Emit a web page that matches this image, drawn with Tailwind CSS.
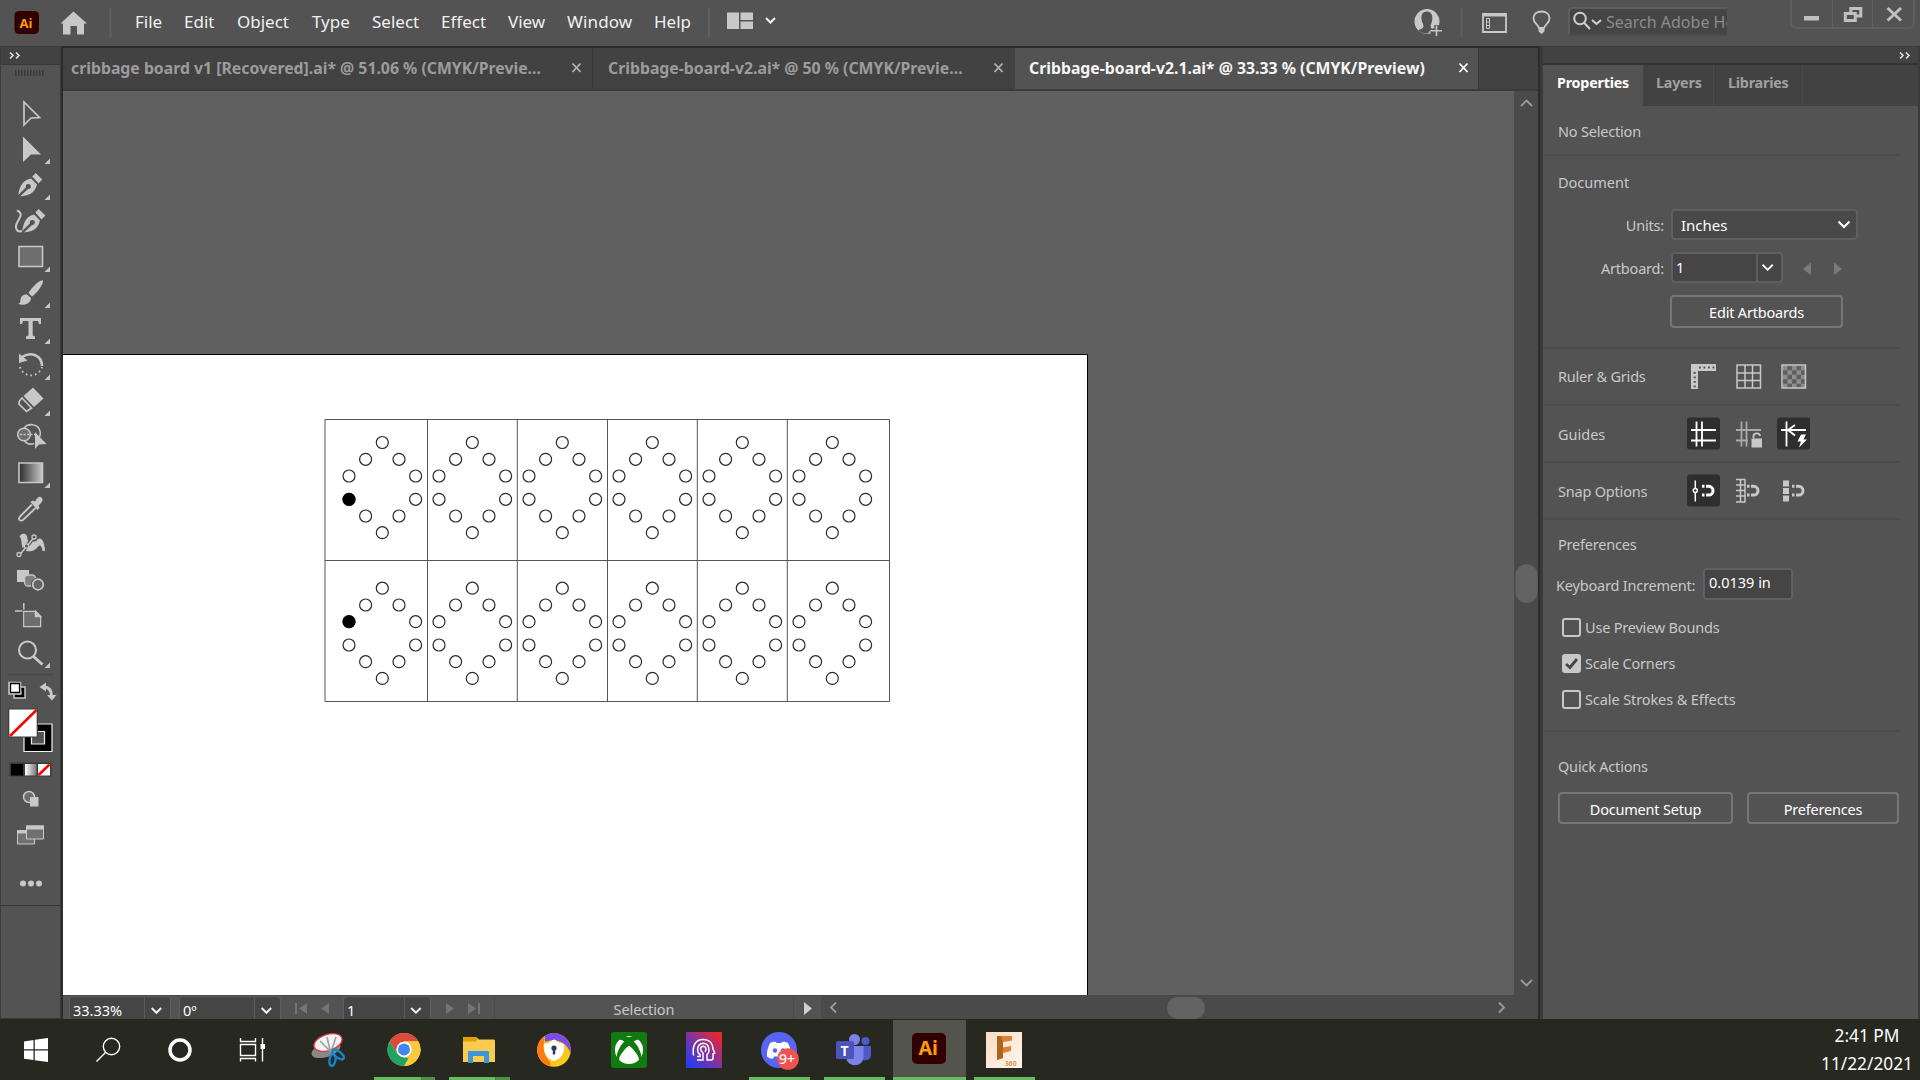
<!DOCTYPE html>
<html lang="en">
<head>
<meta charset="utf-8">
<title>Adobe Illustrator</title>
<script src="https://cdn.jsdelivr.net/npm/@tailwindcss/browser@4"></script>
</head>
<body class="w-[1920px] h-[1080px] overflow-hidden bg-[#535353] font-['Noto_Sans',sans-serif] flex flex-col text-[#c8c8c8]">

<!-- application bar -->
<header class="h-[46px] shrink-0 flex items-start bg-[#535353] whitespace-nowrap">
  <svg class="w-[115px] h-[46px] shrink-0" viewBox="0 0 115 46">
    <rect x="14.500" y="11" width="24.500" height="23" rx="4.500" fill="#310000"/>
    <text x="19.500" y="27.500" font-size="13" font-weight="700" fill="#ff9a00" font-family="Noto Sans">Ai</text>
    <path fill="#c8c8c8" d="M73.500 11.500 87 23.500H84V34.500H77V26H70.500V34.500H63V23.500H60.500Z"/>
    <path d="M110.500 8V37" stroke="#5f5f5f" stroke-width="2"/>
  </svg>
  <nav class="flex h-[43px] items-center pl-[20px] text-[17px] text-[#f0f0f0]">
    <span class="w-[49px]">File</span><span class="w-[53px]">Edit</span><span class="w-[75px]">Object</span><span class="w-[60px]">Type</span><span class="w-[69px]">Select</span><span class="w-[67px]">Effect</span><span class="w-[59px]">View</span><span class="w-[87px] tracking-[0.15px]">Window</span><span class="w-[50px]">Help</span>
  </nav>
  <svg class="w-[86px] h-[46px] shrink-0" viewBox="704 0 86 46" fill="#c8c8c8">
    <path d="M709 8V37" stroke="#5f5f5f" stroke-width="2"/>
    <path d="M727 12.500H739V29H727ZM740.500 12.500H753V20H740.500ZM740.500 21.500H753V29H740.500Z"/>
    <path d="M766 18 770.500 22.500 775 18" fill="none" stroke="#f4f4f4" stroke-width="2"/>
  </svg>
  <svg class="w-[180px] h-[46px] shrink-0 ml-auto" viewBox="1388 0 180 46" fill="none" stroke="#c8c8c8" stroke-width="1.800">
    <circle cx="1427" cy="21.500" r="12.500" fill="#c8c8c8" stroke="none"/>
    <path d="M1427 11.500C1422.500 11.500 1421 15 1421.500 19 1422 23 1423.500 24 1423.500 26.500 1423 29 1419.500 29 1418.500 30.500 1421 33 1424 33.500 1428 33.500L1431.500 28C1430 27.500 1430.500 25 1431.500 23 1433.500 17 1432 11.500 1427 11.500Z" fill="#535353" stroke="none"/>
    <path d="M1436.500 25V36.500M1430.500 30.700H1442" stroke="#535353" stroke-width="4.500"/><path d="M1436.500 25.500V36M1431 30.700H1442" stroke-width="1.600"/>
    <path d="M1461.500 8V37" stroke="#5f5f5f" stroke-width="2"/>
    <path d="M1483 14H1506V32H1483Z"/><path d="M1483 15H1506" stroke-width="3"/><path d="M1486.500 18.500H1489.500V28.500H1486.500ZM1486.500 22H1489.500M1486.500 25.500H1489.500" stroke-width="1"/>
    <path d="M1539 28.500C1539 25 1533.500 23.500 1533.500 18.500 1533.500 14 1537 11.500 1541.500 11.500S1549.500 14 1549.500 18.500C1549.500 23.500 1544 25 1544 28.500"/><path d="M1538.500 27H1544.500V31.500L1541.500 34 1538.500 31.500Z" fill="#c8c8c8" stroke="none"/>
  </svg>
  <div class="mt-[7px] w-[159px] h-[29px] shrink-0 border-2 border-r-0 border-[#5e5e5e] border-b-[#4b4b4b] rounded-l bg-[#454545] flex items-center overflow-hidden text-[16px] text-[#8c8c8c]">
    <svg class="w-[36px] h-[27px] shrink-0" viewBox="0 0 36 27" fill="none" stroke="#d0d0d0" stroke-width="2"><circle cx="10" cy="10.500" r="5.800"/><path d="M14.300 15 20 21M22 12 26.500 16 31 12"/></svg>
    <span class="shrink-0 pt-px">Search Adobe Help</span>
  </div>
  <div class="ml-[63px] mr-[5px] w-[125px] h-[29px] shrink-0 border-2 border-t-0 border-[#5f5f5f] rounded-b-md grid grid-cols-3 divide-x divide-[#5f5f5f]">
    <svg viewBox="0 0 40 29" class="h-[29px]"><path d="M12 16H27V20.500H12Z" fill="#c0c0c0"/></svg>
    <svg viewBox="0 0 40 29" class="h-[29px]" fill="none" stroke="#c0c0c0" stroke-width="3"><path d="M13.300 13.500H23.300V20.500H13.300ZM18.800 13V8.500H28.800V16H23.800"/></svg>
    <svg viewBox="0 0 40 29" class="h-[29px]" fill="none" stroke="#c0c0c0" stroke-width="3"><path d="M14.500 8 28 20.500M28 8 14.500 20.500"/></svg>
  </div>
</header>

<main class="h-[973px] shrink-0 flex">
  <!-- tools -->
  <aside class="w-[61px] shrink-0 flex flex-col bg-[#535353] border-t border-[#3c3c3c] border-l border-r">
    <div class="h-[18px] shrink-0 bg-[#424242] border-b border-[#393939]"><svg class="w-[59px] h-[17px]" viewBox="0 0 59 17" fill="none" stroke="#e0e0e0" stroke-width="1.600"><path d="M9 5.500 12 8.500 9 11.500M15 5.500 18 8.500 15 11.500"/></svg></div>
    <div class="h-[30px] shrink-0"><svg class="w-[59px] h-[30px]" viewBox="0 0 59 30"><path d="M14 8H43" stroke="#3a3a3a" stroke-width="6" stroke-dasharray="1.500 1.500"/></svg></div>
    <div class="flex flex-col [&>svg]:w-[60px] [&>svg]:h-[36px] [&>svg]:-ml-px">
      <svg viewBox="0 0 60 36"><path d="M24 7 39.500 22.500 31 23 24 30Z" fill="none" stroke="#c8c8c8" stroke-width="1.700"/></svg>
      <svg viewBox="0 0 60 36" fill="#c8c8c8"><path d="M23 5.500 41 23.500H31L23 31ZM50 27.500V33H44.500Z"/></svg>
      <svg viewBox="0 0 60 36" fill="#c8c8c8"><path d="M32.300 9.500 35.700 6 42.300 12.500 38.500 16.500ZM18.300 28 26 20.200A2.500 2.500 0 1 1 28 22L20 29.500C28 28.500 34.500 27 37 17.500L31 11.500C21 13.500 19.500 21 18.300 28ZM50 27.500V33H44.500Z"/></svg>
      <svg viewBox="0 0 60 36" fill="#c8c8c8"><path d="M35.300 9.500 38.700 6 45.300 12.500 41.500 16.500ZM22.300 28 30 20.200A2.500 2.500 0 1 1 32 22L24 29.500C32 28.500 37.500 27 40 17.500L34 11.500C25 13.500 23.500 21 22.300 28Z"/><path d="M17 7.500C23 10 20.500 14 17.500 19 14 25 17 30 22 28" fill="none" stroke="#c8c8c8" stroke-width="2"/></svg>
      <svg viewBox="0 0 60 36" fill="#c8c8c8"><path d="M19 7.500H42.500V27.500H19Z" fill="#6e6e6e" stroke="#c8c8c8" stroke-width="1.600"/><path d="M50 27.500V33H44.500Z"/></svg>
      <svg viewBox="0 0 60 36" fill="#c8c8c8"><path d="M42.500 5C38 6 31 13.500 28.500 18L32 21.500C36.500 18.500 42 11 43 7ZM27 19.500C23 19 20.500 22 20.500 25 20.500 27.500 19.500 28.500 18 28.800 23 31 30.500 29.500 31 23ZM50 27.500V33H44.500Z"/></svg>
      <svg viewBox="0 0 60 36" fill="#c8c8c8"><path d="M20 7H41V13H39L38 10H32.700V24.500L35 25.500V28H26V25.500L28.500 24.500V10H23L22 13H20ZM50 27.500V33H44.500Z"/></svg>
      <svg viewBox="0 0 60 36" fill="#c8c8c8"><path d="M19 6.500V16L27.500 13.500Z"/><path d="M22 10C32 4 42 9 42 19" fill="none" stroke="#c8c8c8" stroke-width="2.500"/><path d="M20 20C22 29 37 33 42 20" fill="none" stroke="#c8c8c8" stroke-width="1.800" stroke-dasharray="1.700 3"/><path d="M50 27.500V33H44.500Z"/></svg>
      <svg viewBox="0 0 60 36" fill="#c8c8c8"><path d="M33 4.500 43.500 15.500 34 24 23.500 13Z"/><path d="M22 15 31.500 25 26.500 28.500 19 21Q18.500 18.500 22 15Z" fill="none" stroke="#c8c8c8" stroke-width="1.700"/><path d="M50 27.500V33H44.500Z"/></svg>
      <svg viewBox="0 0 60 36" fill="none" stroke="#c8c8c8" stroke-width="1.500"><circle cx="24" cy="15.500" r="6.300" fill="#6e6e6e"/><path d="M24 9.500C27 4 38 4 40 12 41 15 40 17 39.500 18M24 21.500C27 25 30 26 34 24.500"/><path d="M20 15.500H35" stroke-dasharray="2 1.500"/><path d="M35 13V30L39 25.500 46.500 25Z" fill="#c8c8c8" stroke="none"/></svg>
      <svg viewBox="0 0 60 36"><defs><linearGradient id="gr"><stop stop-color="#2c2c2c"/><stop offset="1" stop-color="#c8c8c8"/></linearGradient></defs><path d="M19 8H42.500V27.500H19Z" fill="url(#gr)" stroke="#c8c8c8" stroke-width="1.600"/><path d="M50 27.500V33H44.500Z" fill="#c8c8c8"/></svg>
      <svg viewBox="0 0 60 36"><path d="M32 13.500 20.500 25C17.500 28 20 31.500 23.500 28.500L35.500 17" fill="none" stroke="#c8c8c8" stroke-width="1.900"/><path d="M30.500 11 32.500 9.500 35 10.500C38 5 40 5 41.500 6.500 44 9 42 11.500 38.500 14.500L39.500 17 37.500 19Z" fill="#c8c8c8"/></svg>
      <svg viewBox="0 0 60 36" fill="#c8c8c8"><path d="M21 7.500C24 5.500 28 7 27.500 13 28 15 34 15 36.500 14 38 9.500 43 11 44 17 44.500 20 45.300 22 44.800 24H42.500C42 19 40 17.500 38.500 19 36 23.500 29 26.500 23.500 22.500 21 19 22 11 19.500 9.500Z"/><path d="M20 28 33.500 10.500" fill="none" stroke="#535353" stroke-width="4"/><path d="M20 27.500 33.500 11" fill="none" stroke="#c8c8c8" stroke-width="1.400"/><g fill="#535353" stroke="#c8c8c8" stroke-width="1.300"><circle cx="19" cy="27.500" r="2"/><circle cx="26.500" cy="19" r="2.200"/><circle cx="34" cy="10" r="2"/></g></svg>
      <svg viewBox="0 0 60 36"><path d="M17 7H29V19H17Z" fill="#c8c8c8"/><rect x="24.500" y="12" width="11" height="11" rx="3.500" fill="#808080" stroke="#c8c8c8" stroke-width="1.300"/><circle cx="38" cy="21.500" r="7" fill="#535353"/><circle cx="38" cy="21.500" r="5.300" fill="#646464" stroke="#c8c8c8" stroke-width="1.700"/></svg>
      <svg viewBox="0 0 60 36" fill="none" stroke="#c8c8c8" stroke-width="1.500"><path d="M23.800 4V10.500M15 12H22.500M23.800 12.500H35.500L40.500 17.500V27.500H23.800Z"/><path d="M24.500 13.500H35V18H40V27H24.500Z" fill="#6e6e6e" stroke="none"/><path d="M35.500 12.500V17.500H40.500Z" fill="#c8c8c8"/></svg>
      <svg viewBox="0 0 60 36"><circle cx="27.500" cy="15" r="8.500" fill="none" stroke="#c8c8c8" stroke-width="2"/><path d="M33.500 21.500 42.500 29.500" stroke="#c8c8c8" stroke-width="3"/><path d="M50 27.500V33H44.500Z" fill="#c8c8c8"/></svg>
    </div>
    <svg class="w-[60px] h-[234px] shrink-0 -ml-px" viewBox="0 671 60 234" fill="none">
      <path d="M8 674.500H53" stroke="#474747" stroke-width="1.500"/>
      <path d="M14 687H25V698H14Z" fill="#000" stroke="#c8c8c8" stroke-width="1.500"/><path d="M17.500 690.500H21.500V694.500H17.500Z" fill="#c8c8c8"/><path d="M9 682.500H20.500V694H9Z" fill="#fff" stroke="#c8c8c8" stroke-width="1.500"/><path d="M10.500 683.500H19.500V692.500H10.500Z" fill="#fff" stroke="#000" stroke-width="1.300"/>
      <path d="M44 687C49 687 51.500 690 51.500 696" stroke="#c8c8c8" stroke-width="3"/><path d="M46 682.500V691.500L39.500 687ZM47 695H56.500L52 700.500Z" fill="#c8c8c8"/>
      <path d="M24 724H52V751.500H24Z" fill="#000" stroke="#f0f0f0" stroke-width="1.200"/><path d="M31.500 731.500H44.500V744H31.500Z" fill="#535353" stroke="#f0f0f0" stroke-width="1.200"/>
      <path d="M8.700 709H37.300V737H8.700Z" fill="#fff" stroke="#3a3a3a" stroke-width="1.200"/><path d="M10 736 36.500 710" stroke="#ff0000" stroke-width="2.500"/>
      <path d="M9.500 762.500H51.500V776.500H9.500Z" fill="#3a3a3a"/><path d="M11 764H23V775.500H11Z" fill="#000"/><defs><linearGradient id="gw"><stop stop-color="#fff"/><stop offset="1" stop-color="#777"/></linearGradient></defs><path d="M25 764H36.500V775.500H25Z" fill="url(#gw)"/><path d="M38 764H50V775.500H38Z" fill="#fff"/><path d="M38.500 775 49.500 764.500" stroke="#ff0000" stroke-width="2.500"/>
      <circle cx="29" cy="797" r="5.500" fill="#6e6e6e" stroke="#c8c8c8" stroke-width="1.500"/><path d="M30 797H38.500V806.500H30Z" fill="#c8c8c8"/>
      <path d="M17.500 830.500H34.500V844H17.500Z" fill="#707070" stroke="#c8c8c8"/><path d="M17 832H35" stroke="#c8c8c8" stroke-width="3"/><path d="M26.500 826H43.500V839H26.500Z" fill="#707070" stroke="#c8c8c8"/><path d="M26 827.500H44" stroke="#c8c8c8" stroke-width="4"/>
      <g fill="#c8c8c8"><circle cx="23" cy="883.500" r="3"/><circle cx="31" cy="883.500" r="3"/><circle cx="39" cy="883.500" r="3"/></g>
    </svg>
    <div class="grow border-t border-b border-[#383838] bg-[#535353]"></div>
  </aside>

  <!-- document window -->
  <section class="w-[1479px] shrink-0 border-t-2 border-l-2 border-r-2 border-[#2c2c2c] flex flex-col">
    <div class="h-[43px] shrink-0 flex bg-[#424242] border-b-2 border-[#3b3b3b] text-[15.800px] font-bold text-[#9c9c9c] whitespace-nowrap leading-[40px]">
      <div class="w-[530px] pl-[8px] flex border-r border-[#383838]"><span class="w-[500px] shrink-0">cribbage board v1 [Recovered].ai* @ 51.06 % (CMYK/Previe...</span><svg class="w-[14px] h-[40px]" viewBox="0 0 14 40" fill="none" stroke="#b4b4b4" stroke-width="1.800"><path d="M1.500 15.500 9.500 24M9.500 15.500 1.500 24"/></svg></div>
      <div class="w-[422px] pl-[15px] flex"><span class="w-[385px] shrink-0">Cribbage-board-v2.ai* @ 50 % (CMYK/Previe...</span><svg class="w-[14px] h-[40px]" viewBox="0 0 14 40" fill="none" stroke="#b4b4b4" stroke-width="1.800"><path d="M1.500 15.500 9.500 24M9.500 15.500 1.500 24"/></svg></div>
      <div class="w-[464px] pl-[14px] flex bg-[#535353] text-[#f5f5f5] border-r border-[#383838]"><span class="w-[429px] shrink-0">Cribbage-board-v2.1.ai* @ 33.33 % (CMYK/Preview)</span><svg class="w-[14px] h-[40px]" viewBox="0 0 14 40" fill="none" stroke="#fff" stroke-width="1.800"><path d="M1.500 15.500 9.500 24M9.500 15.500 1.500 24"/></svg></div>
    </div>
    <div class="h-[904px] shrink-0 flex">
      <svg class="w-[1451px] h-[904px] shrink-0 bg-[#606060]" viewBox="63 91 1451 904" fill="none">
        <path d="M60 354.500H1087.500V1000H60Z" fill="#fff" stroke="#000"/>
        <path d="M325 419.500H889.500V701.500H325ZM325 560.500H889.500M427.500 419.500V701.500M517.300 419.500V701.500M607.500 419.500V701.500M697.300 419.500V701.500M787.300 419.500V701.500" stroke="#555"/>
        <defs>
          <g id="ring" stroke="#2a2a2a" stroke-width="1.200">
            <circle cx="382.300" cy="442.500" r="6"/><circle cx="365.600" cy="459.300" r="6"/><circle cx="399" cy="459.300" r="6"/><circle cx="349" cy="476" r="6"/><circle cx="415.600" cy="476" r="6"/><circle cx="349" cy="499.300" r="6"/><circle cx="415.600" cy="499.300" r="6"/><circle cx="365.600" cy="516" r="6"/><circle cx="399" cy="516" r="6"/><circle cx="382.300" cy="532.700" r="6"/>
          </g>
          <g id="row"><use href="#ring"/><use href="#ring" x="90"/><use href="#ring" x="180"/><use href="#ring" x="270"/><use href="#ring" x="360"/><use href="#ring" x="450"/></g>
        </defs>
        <use href="#row"/><use href="#row" y="145.700"/>
        <circle cx="349" cy="499.300" r="6.500" fill="#000"/><circle cx="349" cy="621.700" r="6.500" fill="#000"/>
      </svg>
      <svg class="w-[24px] h-[904px] shrink-0 bg-[#4a4a4a]" viewBox="0 91 24 904" fill="none" stroke="#9c9c9c" stroke-width="1.800"><path d="M7 106 12.500 100.500 18 106M7 980 12.500 985.500 18 980"/><rect x="1.500" y="564" width="22" height="39" rx="11" fill="#626262" stroke="none"/></svg>
    </div>
    <div class="h-[24px] shrink-0 flex overflow-hidden bg-[#535353] border-t border-[#484848] text-[14.500px] leading-[26px] text-white">
      <div class="ml-[6px] w-[102px] flex rounded-t border border-b-0 border-[#5e5e5e] bg-[#454545]"><span class="w-[75px] pl-[3px]">33.33%</span><svg class="w-[26px] h-[23px] border-l border-[#5a5a5a]" viewBox="0 0 26 23" fill="none" stroke="#f0f0f0" stroke-width="2"><path d="M7 11 12 16 17 11"/></svg></div>
      <div class="ml-[8px] w-[102px] flex rounded-t border border-b-0 border-[#5e5e5e] bg-[#454545]"><span class="w-[75px] pl-[3px]">0º</span><svg class="w-[26px] h-[23px] border-l border-[#5a5a5a]" viewBox="0 0 26 23" fill="none" stroke="#f0f0f0" stroke-width="2"><path d="M7 11 12 16 17 11"/></svg></div>
      <svg class="w-[62px] h-[23px]" viewBox="281 996 62 23" fill="#747474"><path d="M295 1003H297V1014H295ZM307 1003V1014L299 1008.500ZM329 1003V1014L321 1008.500Z"/></svg>
      <div class="w-[88px] flex rounded-t border border-b-0 border-[#5e5e5e] bg-[#454545]"><span class="w-[61px] pl-[3px]">1</span><svg class="w-[26px] h-[23px] border-l border-[#5a5a5a]" viewBox="0 0 26 23" fill="none" stroke="#f0f0f0" stroke-width="2"><path d="M6.500 11 11.500 16 16.500 11"/></svg></div>
      <svg class="w-[63px] h-[23px]" viewBox="431 996 63 23" fill="#747474"><path d="M446 1003V1014L454 1008.500ZM468 1003V1014L476 1008.500ZM478 1003H480V1014H478Z"/></svg>
      <div class="w-[300px] border-x border-[#4a4a4a] text-center text-[#c8c8c8] -tracking-[0.1px]">Selection</div>
      <svg class="w-[27px] h-[23px]" viewBox="794 996 27 23"><path d="M804 1002V1015L812 1008.500Z" fill="#d0d0d0"/></svg>
      <svg class="w-[717px] h-[23px] bg-[#4a4a4a]" viewBox="821 996 717 23" fill="none" stroke="#9c9c9c" stroke-width="1.800"><path d="M836 1002.500 831 1007.500 836 1012.500M1499 1002.500 1504 1007.500 1499 1012.500"/><rect x="1167" y="997" width="38" height="22" rx="11" fill="#626262" stroke="none"/></svg>
    </div>
  </section>

  <!-- properties panel -->
  <aside class="w-[380px] shrink-0 border-t border-l-[3px] border-r-2 border-[#3a3a3a] bg-[#535353] text-[14.500px] -tracking-[0.2px] flex flex-col whitespace-nowrap">
    <div class="h-[18px] shrink-0 bg-[#424242] border-b-2 border-[#333] flex justify-end"><svg class="w-[24px] h-[17px]" viewBox="0 0 24 17" fill="none" stroke="#e0e0e0" stroke-width="1.600"><path d="M6 5.500 9 8.500 6 11.500M12 5.500 15 8.500 12 11.500"/></svg></div>
    <div class="h-[41px] shrink-0 flex bg-[#424242] font-bold text-[#a0a0a0] text-[14.300px] leading-[35px]">
      <div class="w-[100px] pl-[14px] bg-[#535353] text-white">Properties</div>
      <div class="w-[71px] pl-[13px] border-r border-[#4a4a4a]">Layers</div>
      <div class="w-[89px] pl-[14px] border-r border-[#4a4a4a]">Libraries</div>
    </div>
    <div class="w-[357px] flex flex-col">
      <div class="h-[50px] pl-[15px] leading-[50px] border-b-2 border-[#4b4b4b]">No Selection</div>
      <div class="h-[193px] pl-[15px] pt-[16px] border-b-2 border-[#4b4b4b]">
        <div class="leading-[20px] h-[37px] tracking-normal">Document</div>
        <div class="flex h-[43px]"><span class="w-[106px] text-right leading-[32px]">Units:</span><div class="ml-[7px] w-[187px] h-[31px] shrink-0 rounded border-2 border-[#5f5f5f] bg-[#494949] flex justify-between text-white leading-[29px] pl-[8px] tracking-normal"><span class="text-[15px]">Inches</span><svg class="w-[24px] h-[27px]" viewBox="0 0 24 27" fill="none" stroke="#fff" stroke-width="2"><path d="M6.500 10.500 12 16 17.500 10.500"/></svg></div></div>
        <div class="flex h-[43px]"><span class="w-[106px] text-right leading-[32px]">Artboard:</span><div class="ml-[7px] w-[112px] h-[31px] shrink-0 rounded border-2 border-[#5f5f5f] bg-[#454545] flex text-white leading-[26px] pl-[3px]"><span class="w-[80px]">1</span><svg class="w-[25px] h-[27px] border-l-2 border-[#5f5f5f]" viewBox="0 0 25 27" fill="none" stroke="#fff" stroke-width="2"><path d="M5 10.500 10.500 16 16 10.500"/></svg></div><svg class="w-[70px] h-[31px] shrink-0" viewBox="0 0 70 31" fill="#7a7a7a"><path d="M28 10.500V23L20 17ZM51 10.500V23L59 17Z"/></svg></div>
        <div class="ml-[112px] w-[173px] h-[33px] rounded border-2 border-[#767676] text-center text-white leading-[31px]">Edit Artboards</div>
      </div>
      <div class="h-[57px] pl-[15px] flex items-center border-b-2 border-[#4b4b4b]"><span class="w-[128px] pt-px">Ruler &amp; Grids</span>
        <svg class="w-[124px] h-[33px]" viewBox="1686 360 124 33"><path d="M1691 364H1716V371H1698V389H1691Z" fill="#c8c8c8"/><path d="M1699 367.500H1715M1694.700 372V388" stroke="#535353" stroke-width="2.200" stroke-dasharray="1.800 2.700"/><path d="M1737 365H1760.500V388H1737ZM1745 365V388M1752.500 365V388M1737 373H1760.500M1737 380.500H1760.500" fill="none" stroke="#c8c8c8" stroke-width="1.500"/><path d="M1782 365H1805.500V388H1782Z" fill="#606060"/><path d="M1783 368H1805M1783 377H1805M1783 386H1805" stroke="#8e8e8e" stroke-width="4.500" stroke-dasharray="4.500"/><path d="M1787.500 372.500H1805M1787.500 381.500H1805" stroke="#8e8e8e" stroke-width="4.500" stroke-dasharray="4.500"/><path d="M1782 365H1805.500V388H1782Z" fill="none" stroke="#c8c8c8" stroke-width="1.500"/></svg></div>
      <div class="h-[57px] pl-[15px] flex items-center border-b-2 border-[#4b4b4b]"><span class="w-[128px] pt-[2px] tracking-normal">Guides</span>
        <svg class="w-[124px] h-[33px]" viewBox="1686 416.500 124 33" fill="none" stroke-width="1.800"><rect x="1687" y="417" width="33" height="32" rx="3" fill="#2e2e2e"/><rect x="1777" y="417" width="33" height="32" rx="3" fill="#2e2e2e"/><path d="M1691 429.500H1716M1691 440H1716M1696.500 421V446M1702 421V446" stroke="#fff"/><path d="M1736 429.500H1761M1736 440H1748M1741.500 421V446M1746.500 421V446" stroke="#aaa"/><path d="M1751.500 438H1762V447H1751.500Z" fill="#c8c8c8"/><path d="M1753.500 438V435.500C1753.500 432 1760 432 1760 435.500" stroke="#c8c8c8"/><path d="M1781 429.500H1806M1786.500 421V446M1795 424.500 1788 429.500 1795 435" stroke="#fff"/><path d="M1801 434 1797.500 441H1801L1799 447 1807 439H1803.500L1806 434Z" fill="#fff"/></svg></div>
      <div class="h-[57px] pl-[15px] flex items-center border-b-2 border-[#4b4b4b]"><span class="w-[128px] pt-[2px]">Snap Options</span>
        <svg class="w-[124px] h-[33px]" viewBox="1686 473.500 124 33" fill="none" stroke="#c8c8c8" stroke-width="1.500"><rect x="1687" y="474" width="33" height="32" rx="3" fill="#2e2e2e" stroke="none"/><g stroke="#fff"><path d="M1695.300 480V488M1695.300 492V501"/><circle cx="1695.300" cy="490" r="2"/><path d="M1702 485.800H1704.500M1702 494.500H1704.500M1706 485.800H1708.500C1714.500 485.800 1714.500 494.500 1708.500 494.500H1706" stroke-width="3"/></g><path d="M1736 479H1745.500M1736 484.500H1745.500M1736 490H1745.500M1736 495.500H1745.500M1736 501.500H1745.500M1740.500 479V502M1745 479V502"/><path d="M1747 485.800H1749.500M1747 494.500H1749.500M1751 485.800H1753.500C1759.500 485.800 1759.500 494.500 1753.500 494.500H1751M1792 485.800H1794.500M1792 494.500H1794.500M1796 485.800H1798.500C1804.500 485.800 1804.500 494.500 1798.500 494.500H1796" stroke-width="3"/><path d="M1783 480H1789V486H1783ZM1783 487.500H1789V493.500H1783ZM1783 495H1789V501H1783Z" fill="#c8c8c8" stroke="none"/></svg></div>
      <div class="h-[212px] pl-[15px] pt-[14px] border-b-2 border-[#4b4b4b]">
        <div class="h-[34px] leading-[20px]">Preferences</div>
        <div class="flex h-[49px] -ml-[2px]"><span class="w-[147px] leading-[34px]">Keyboard Increment:</span><div class="w-[90px] h-[32px] rounded border-2 border-[#606060] bg-[#454545] pl-[4px] text-white leading-[25px] tracking-normal">0.0139 in</div></div>
        <div class="flex h-[36px] pl-[4px]"><i class="w-[19px] h-[19px] rounded-[3px] border-2 border-[#c8c8c8] mr-[4px] mt-px"></i><span class="leading-[21px]">Use Preview Bounds</span></div>
        <div class="flex h-[36px] pl-[4px]"><svg class="w-[19px] h-[19px] rounded-[3px] bg-[#c8c8c8] mr-[4px] mt-px" viewBox="0 0 19 19" fill="none" stroke="#454545" stroke-width="2.800"><path d="M4 10 8 13.500 15 5"/></svg><span class="leading-[21px]">Scale Corners</span></div>
        <div class="flex h-[36px] pl-[4px]"><i class="w-[19px] h-[19px] rounded-[3px] border-2 border-[#c8c8c8] mr-[4px] mt-px"></i><span class="leading-[21px] -tracking-[0.1px]">Scale Strokes &amp; Effects</span></div>
      </div>
      <div class="pl-[15px] pt-[24px]">
        <div class="h-[36px] leading-[20px]">Quick Actions</div>
        <div class="flex gap-[14px] text-white text-center leading-[31px]"><div class="w-[175px] h-[32px] shrink-0 rounded border-2 border-[#767676]">Document Setup</div><div class="w-[152px] h-[32px] shrink-0 rounded border-2 border-[#767676]">Preferences</div></div>
      </div>
    </div>
  </aside>
</main>

<!-- taskbar -->
<footer class="h-[61px] shrink-0 bg-[#27281f] flex text-white">
  <svg class="w-[1060px] h-[61px] shrink-0" viewBox="0 1019 1060 61" fill="none">
    <path d="M24 1041.500 33.500 1040V1049.200H24ZM34.800 1039.800 48 1038V1049.200H34.800ZM24 1050.500H33.500V1060L24 1058.800ZM34.800 1050.500H48V1062L34.800 1060.300Z" fill="#fff"/>
    <g stroke="#fff" stroke-width="1.400"><circle cx="111.500" cy="1046.500" r="8.200"/><path d="M105.500 1052.500 96.500 1061.500"/></g>
    <circle cx="180" cy="1050" r="10" stroke="#fff" stroke-width="3.500"/>
    <path d="M240.500 1038V1041.500H255.500V1038M240.500 1044.500H255.500V1055.500H240.500ZM240.500 1061.500V1058.500H255.500V1061.500M262.500 1038V1061.500" stroke="#fff" stroke-width="1.400"/><path d="M260.500 1044H265V1049H260.500Z" fill="#fff"/>
    <ellipse cx="326" cy="1050" rx="15" ry="7" transform="rotate(-18 326 1050)" fill="#8c8785"/><ellipse cx="328" cy="1042.500" rx="14.500" ry="8" transform="rotate(-18 328 1042.500)" fill="#f4f4f4" stroke="#e03a3e" stroke-width="1.300"/><path d="M320 1041 331 1052M327 1037 330.500 1052M336 1037 331 1052" stroke="#9aa0a4" stroke-width="1.600"/><ellipse cx="338" cy="1054.500" rx="3" ry="7" transform="rotate(-55 338 1054.500)" stroke="#1684d0" stroke-width="2.400"/><ellipse cx="332.500" cy="1060" rx="3" ry="6" transform="rotate(10 332.500 1060)" stroke="#1684d0" stroke-width="2.400"/>
    <g transform="translate(404 1049.500)"><circle r="16.500" fill="#fbc93d"/><path d="M-14.300 -8.250A16.500 16.500 0 0 1 14.300 -8.250H0L-7.100 4.100Z" fill="#dc4a3d"/><path d="M-14.300 -8.250-7.100 4.100 0 8.200H7.100L0 16.500A16.500 16.500 0 0 1 -14.300 -8.250Z" fill="#1ea362"/><path d="M0 -8.250H14.300A16.500 16.500 0 0 1 0 16.500L7.100 4.100Z" fill="#fbc93d"/><circle r="7.700" fill="#fff"/><circle r="6" fill="#4285f4"/></g>
    <path d="M463 1037H476L479 1039.500H494Q495 1039.500 495 1041V1062H463Z" fill="#fbcb4f"/><path d="M463 1038.500Q463 1037 464 1037H476L477.500 1039 476 1041.500H463Z" fill="#e0a000"/><path d="M468 1063V1052Q468 1051 469 1051H488Q489 1051 489 1052V1063H484V1056H473V1063Z" fill="#3a96dd"/>
    <circle cx="554" cy="1050" r="16.800" fill="#f8c81c"/><path d="M545 1035.700A16.800 16.800 0 0 1 570.500 1053C566 1041 555 1038 545 1042Z" fill="#7b4be8"/><path d="M545 1035.700A16.800 16.800 0 0 0 550 1066.300C553 1062 543 1058 543.500 1045Z" fill="#ff7a14"/><path d="M544 1044C551 1043 552 1039.500 554 1039.500S557 1043 564 1044C565 1055 560 1059 554 1061 548 1059 543 1055 544 1044Z" fill="#fff"/><circle cx="554" cy="1048" r="2.600" fill="#2e3954"/><path d="M552.800 1048H555.200V1054.500H552.800Z" fill="#2e3954"/>
    <rect x="611" y="1032" width="36" height="36" rx="3" fill="#107c10"/><circle cx="629" cy="1050" r="14" fill="#fff"/><path d="M629 1044C623 1049 617 1057 618.500 1060 616 1056 620 1047 625.500 1041.500 623 1039 620.500 1038.500 619 1039L621 1036.500C624 1036 627 1037.500 629 1038.500 631 1037.500 634 1036 637 1036.500L639 1039C637.500 1038.500 635 1039 632.500 1041.500 638 1047 642 1056 639.500 1060 641 1057 635 1049 629 1044Z" fill="#107c10" stroke="#107c10" stroke-width="2"/>
    <defs><linearGradient id="pk" x1="0" y1="1" x2="1" y2="0"><stop stop-color="#1540ff"/><stop offset=".5" stop-color="#8232a0"/><stop offset="1" stop-color="#ff2418"/></linearGradient><linearGradient id="fu" x1="0" y1="0" x2="1" y2="1"><stop stop-color="#fbdcc4"/><stop offset="1" stop-color="#fff6ee"/></linearGradient></defs>
    <path d="M686 1032H722V1068H686Z" fill="url(#pk)"/><path d="M693.500 1055.500C692 1045 696 1039.500 703 1039.500 709.500 1039.500 713 1043.500 713 1049L714.700 1053 713 1054V1058Q713 1060 711 1060H707V1054.500C710 1052.500 710 1043.500 703.300 1043.200 696.500 1043.500 696.500 1052.500 700 1054.500V1056.500H697M697 1060H703V1053C699.500 1050.500 700 1046.500 703.300 1046.200 706.500 1046.500 706.500 1050 705 1052" stroke="#fff" stroke-width="1.500"/>
    <circle cx="779" cy="1050" r="18" fill="#5865f2"/><path d="M770 1043C774 1041 776 1041.500 776.500 1043H781.500C782 1041.500 784 1041 788 1043 790.500 1048 791.500 1052 791 1056.500 788 1058.500 786 1059 785 1058.500L784 1056.500H774L773 1058.500C772 1059 769.500 1058.500 767 1056.500 766.500 1052 768 1047 770 1043Z" fill="#fff"/><circle cx="775" cy="1050.500" r="2.200" fill="#5865f2"/><circle cx="783" cy="1050.500" r="2.200" fill="#5865f2"/><circle cx="788" cy="1059" r="10.800" fill="#ee5350"/><text x="779" y="1064" font-size="14" fill="#fff" font-family="Noto Sans" font-weight="500">9+</text>
    <circle cx="854.500" cy="1039.500" r="5.500" fill="#7b83eb"/><circle cx="865.500" cy="1041" r="4" fill="#5059c9"/><path d="M860 1046H871V1054C871 1060 867 1061 862 1060Z" fill="#5059c9"/><path d="M846 1046H863.500V1057C863 1068 847 1068 846 1057Z" fill="#7b83eb"/><rect x="836" y="1041" width="18" height="18" rx="1.500" fill="#4b53bc"/><text x="840.500" y="1055.500" font-size="14" font-weight="700" fill="#fff" font-family="Noto Sans">T</text>
    <path d="M893 1020H966V1077H893Z" fill="#53544b"/><rect x="912" y="1033" width="34" height="31" rx="5" fill="#310000"/><text x="918.500" y="1055" font-size="19.500" font-weight="700" fill="#ff9a00" font-family="Noto Sans" textLength="19.500" lengthAdjust="spacingAndGlyphs">Ai</text>
    <path d="M986 1032H1022V1068H986Z" fill="url(#fu)"/><path d="M997 1036H1012V1040.500L1003 1042V1047.500L1011 1046V1051L1003 1053V1058L997 1060Z" fill="#d98432"/><path d="M997 1036H1001L1003 1042V1058L997 1060Z" fill="#b0651e"/><text x="1005" y="1065.500" font-size="7" font-weight="700" fill="#e0944a" font-family="Noto Sans" textLength="11.500" lengthAdjust="spacingAndGlyphs">360</text>
    <g fill="#66bb5f"><path d="M374 1077H421.500V1080H374ZM449 1077H495.500V1080H449ZM749 1077H810V1080H749ZM824 1077H885V1080H824ZM893 1077H966V1080H893ZM974 1077H1035V1080H974Z"/></g><path d="M421.500 1077H435V1080H421.500ZM495.500 1077H510V1080H495.500Z" fill="#4f9049"/>
  </svg>
  <div class="ml-auto w-[106px] pt-[3px] text-[17.300px] leading-[28px] text-center whitespace-nowrap"><div>2:41 PM</div><div>11/22/2021</div></div>
</footer>
</body>
</html>
